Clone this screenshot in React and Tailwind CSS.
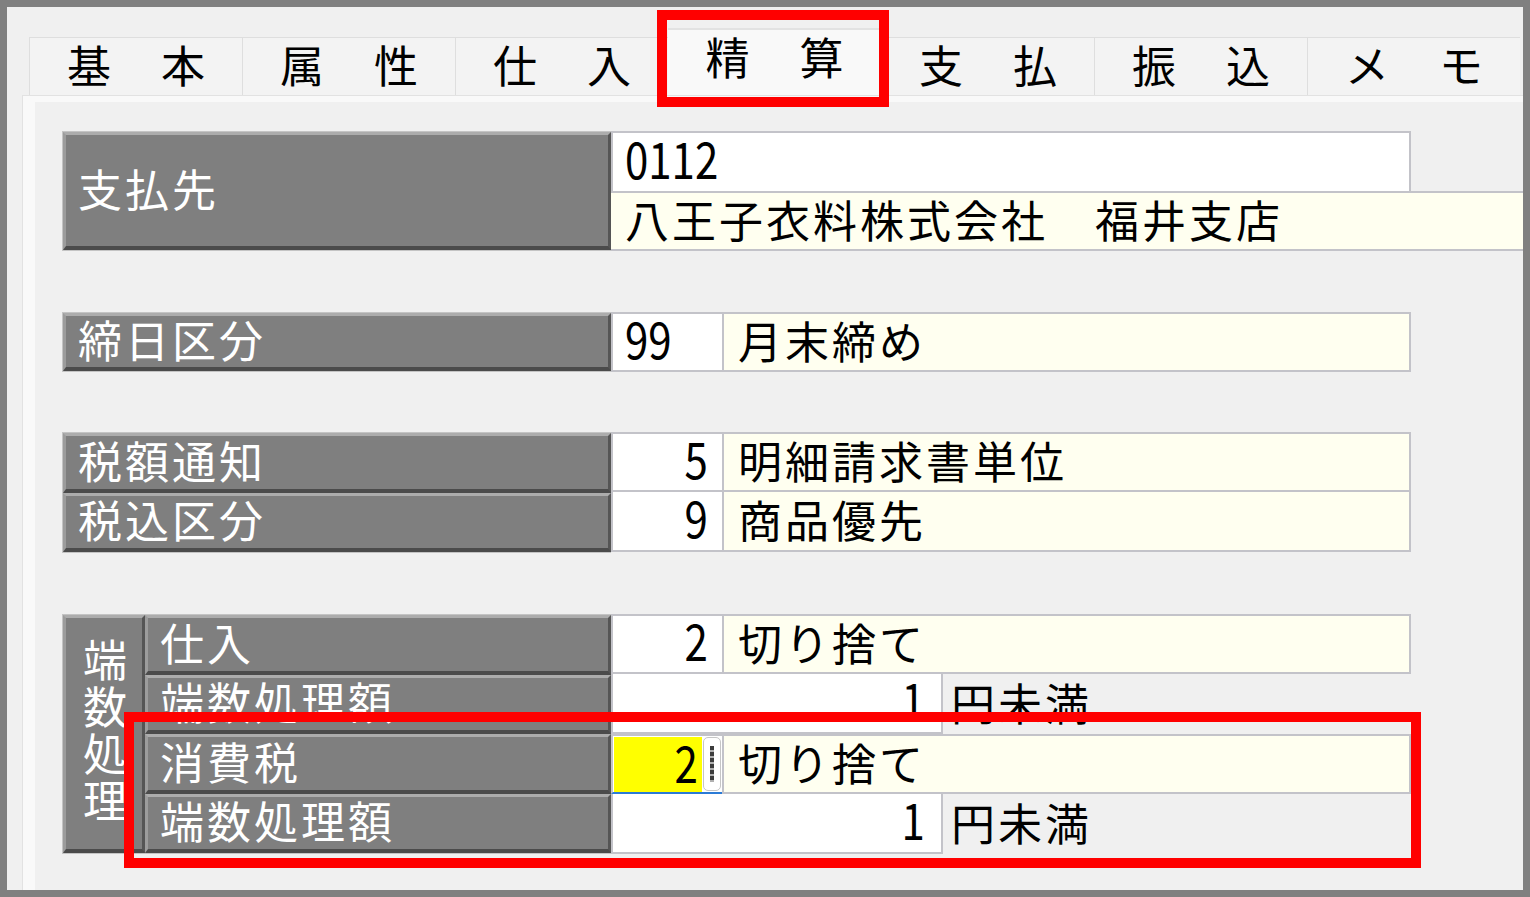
import React from "react";

const FONT = "font-['Noto_Sans_CJK_JP','Noto_Sans_CJK_SC',sans-serif]";

const tabs = ["基　本", "属　性", "仕　入", "精　算", "支　払", "振　込", "メ　モ"];

function Num({ v, right = true }) {
  return (
    <span
      className={
        "inline-block text-[50px] leading-none tracking-normal scale-x-[0.84] " +
        (right ? "origin-right" : "origin-left")
      }
    >
      {v}
    </span>
  );
}

function Lbl({ text, className = "" }) {
  return (
    <div
      className={
        "flex items-center whitespace-nowrap bg-[#7f7f7f] border-t-[3px] border-l-[3px] border-r-[3px] border-b-[4px] border-t-[#acacac] border-l-[#9c9c9c] border-r-[#555555] border-b-[#4b4b4b] pl-[12px] pb-[5px] text-[44px] tracking-[3px] leading-none text-white " +
        className
      }
    >
      {text}
    </div>
  );
}

function CodeRow({ code, desc, left = false, first = true }) {
  return (
    <div className="flex h-[60px]">
      <div
        className={
          "w-[111px] bg-white border-2 border-r-0 border-[#c3c3c9] flex items-center leading-none pb-[10px] " +
          (left ? "pl-[12px] " : "justify-end pr-[14px] ") +
          (first ? "" : "border-t-0")
        }
      >
        <Num v={code} right={!left} />
      </div>
      <div
        className={
          "w-[689px] bg-[#fffff0] border-2 border-[#c3c3c9] flex items-center pl-[14px] pb-[5px] leading-none " +
          (first ? "" : "border-t-0")
        }
      >
        {desc}
      </div>
    </div>
  );
}

function AmountRow({ v, unit, top = false }) {
  return (
    <div className="flex h-[60px]">
      <div
        className={
          "w-[332px] bg-white border-2 border-[#c3c3c9] flex items-center justify-end pr-[16px] pb-[10px] leading-none " +
          (top ? "border-t-0" : "")
        }
      >
        <Num v={v} />
      </div>
      <div className="w-[468px] flex items-center pl-[8px] pb-[5px] leading-none">{unit}</div>
    </div>
  );
}

export default function App() {
  return (
    <div className={"relative w-[1530px] h-[897px] overflow-hidden border-[7px] border-[#808080] bg-[#f0f0f0] flex flex-col text-black text-[44px] tracking-[3px] " + FONT}>
      {/* tabs */}
      <div className="flex items-end pl-[22px] pt-[21px]">
        {tabs.map((t, i) =>
          i === 3 ? (
            <div
              key={t}
              className="w-[213px] h-[67px] shrink-0 border-t-2 border-[#e2e2e2] bg-[#f9f9f9] flex items-center justify-center leading-none pb-[14px] pl-[3px]"
            >
              {t}
            </div>
          ) : (
            <div
              key={t}
              className="w-[213px] h-[58px] shrink-0 border-t border-l border-[#dedede] bg-[#f3f3f3] flex items-center justify-center leading-none pb-[6px] pl-[3px]"
            >
              {t}
            </div>
          )
        )}
      </div>

      {/* panel */}
      <div className="flex-1 ml-[15px] border-l border-t border-[#e2e2e2] bg-[#f9f9f9] pl-[12px] pt-[6px]">
        <div className="h-full bg-[#f0f0f0] pl-[27px] pt-[29px] flex flex-col">
          {/* 支払先 */}
          <div className="flex h-[120px]">
            <div className="w-[549px] shrink-0 border border-r-0 border-[#c4c4c4] flex flex-col">
              <Lbl text="支払先" className="flex-1" />
            </div>
            <div className="flex flex-col flex-1">
              <div className="h-[60px] w-[800px] bg-white border-2 border-b-0 border-[#c3c3c9] flex items-center pl-[12px] pb-[10px] leading-none">
                <Num v="0112" right={false} />
              </div>
              <div className="h-[60px] bg-[#fffff0] border-y-2 border-[#c3c3c9] flex items-center pl-[14px] pb-[5px] leading-none whitespace-nowrap">
                八王子衣料株式会社　福井支店
              </div>
            </div>
          </div>

          {/* 締日区分 */}
          <div className="flex h-[60px] mt-[61px]">
            <div className="w-[549px] shrink-0 border border-r-0 border-[#c4c4c4] flex flex-col">
              <Lbl text="締日区分" className="flex-1" />
            </div>
            <CodeRow code="99" desc="月末締め" left />
          </div>

          {/* 税額通知 / 税込区分 */}
          <div className="flex h-[121px] mt-[60px]">
            <div className="w-[549px] shrink-0 border border-r-0 border-[#c4c4c4] flex flex-col">
              <Lbl text="税額通知" className="flex-1" />
              <Lbl text="税込区分" className="flex-1" />
            </div>
            <div className="flex flex-col">
              <CodeRow code="5" desc="明細請求書単位" />
              <CodeRow code="9" desc="商品優先" first={false} />
            </div>
          </div>

          {/* 端数処理 */}
          <div className="flex h-[240px] mt-[61px]">
            <div className="w-[549px] shrink-0 border border-r-0 border-[#c4c4c4] flex">
              <div className="w-[82px] shrink-0 flex flex-col items-center justify-center bg-[#7f7f7f] border-t-[3px] border-l-[3px] border-r-[3px] border-b-[4px] border-t-[#acacac] border-l-[#9c9c9c] border-r-[#555555] border-b-[#4b4b4b] text-white text-[44px] tracking-normal leading-[47px] pb-[10px] pl-[2px]">
                <span>端</span>
                <span>数</span>
                <span>処</span>
                <span>理</span>
              </div>
              <div className="flex-1 flex flex-col">
                <Lbl text="仕入" className="flex-1" />
                <Lbl text="端数処理額" className="flex-1" />
                <Lbl text="消費税" className="flex-1" />
                <Lbl text="端数処理額" className="flex-1" />
              </div>
            </div>
            <div className="flex flex-col">
              <CodeRow code="2" desc="切り捨て" />
              <AmountRow v="1" unit="円未満" top />
              <div className="flex h-[60px]">
                <div className="w-[111px] bg-white border-2 border-r-0 border-b-[2px] border-[#c3c3c9] border-b-[#2b7bd6] flex items-stretch pl-[1px] pr-[1px] pt-[1px]">
                  <div className="flex-1 bg-[#ffff00] flex items-center justify-end pr-[4px] pb-[8px] leading-none">
                    <Num v="2" />
                  </div>
                  <div className="w-[18px] ml-[1px] mb-[1px] rounded-[5px] border border-[#c6c6c6] bg-white flex items-center justify-center">
                    <div className="w-[4px] h-[36px] bg-[repeating-linear-gradient(to_bottom,#3c3c3c_0px,#3c3c3c_4px,#b0b0b0_4px,#b0b0b0_6px)]" />
                  </div>
                </div>
                <div className="w-[689px] bg-[#fffff0] border-2 border-[#c3c3c9] flex items-center pl-[14px] pb-[5px] leading-none">
                  切り捨て
                </div>
              </div>
              <AmountRow v="1" unit="円未満" top />
            </div>
          </div>
        </div>
      </div>

      {/* highlight boxes */}
      <div className="absolute left-[650px] top-[3px] w-[232px] h-[97px] border-[10px] border-[#ff0000]" />
      <div className="absolute left-[117px] top-[705px] w-[1297px] h-[156px] border-[10px] border-[#ff0000]" />
    </div>
  );
}
